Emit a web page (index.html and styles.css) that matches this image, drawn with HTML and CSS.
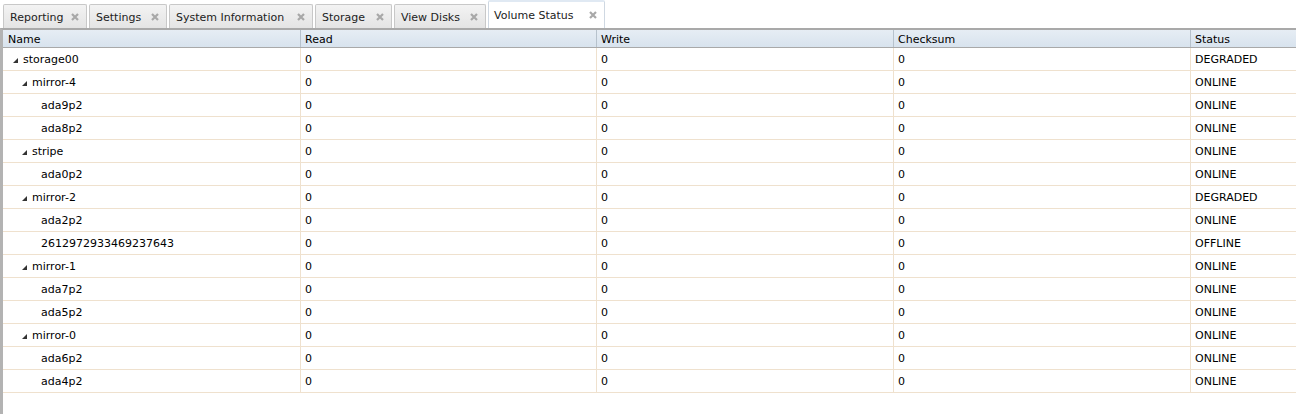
FILE: index.html
```html
<!DOCTYPE html>
<html>
<head>
<meta charset="utf-8">
<link rel="stylesheet" href="styles.css">
</head>
<body>
<div class="tabs">
  <div class="tab"><span>Reporting</span><svg class="x" viewBox="0 0 8 8"><path d="M1 1L7 7M7 1L1 7"/></svg></div>
  <div class="tab"><span>Settings</span><svg class="x" viewBox="0 0 8 8"><path d="M1 1L7 7M7 1L1 7"/></svg></div>
  <div class="tab"><span>System Information</span><svg class="x" viewBox="0 0 8 8"><path d="M1 1L7 7M7 1L1 7"/></svg></div>
  <div class="tab"><span>Storage</span><svg class="x" viewBox="0 0 8 8"><path d="M1 1L7 7M7 1L1 7"/></svg></div>
  <div class="tab"><span>View Disks</span><svg class="x" viewBox="0 0 8 8"><path d="M1 1L7 7M7 1L1 7"/></svg></div>
  <div class="tab active"><span>Volume Status</span><svg class="x" viewBox="0 0 8 8"><path d="M1 1L7 7M7 1L1 7"/></svg></div>
</div>
<div class="panel">
  <div class="row head">
    <div class="c c1">Name</div><div class="c c2">Read</div><div class="c c3">Write</div><div class="c c4">Checksum</div><div class="c c5">Status</div>
  </div>
  <div class="row"><div class="c c1 l0"><i class="tri"></i>storage00</div><div class="c c2">0</div><div class="c c3">0</div><div class="c c4">0</div><div class="c c5">DEGRADED</div></div>
  <div class="row"><div class="c c1 l1"><i class="tri"></i>mirror-4</div><div class="c c2">0</div><div class="c c3">0</div><div class="c c4">0</div><div class="c c5">ONLINE</div></div>
  <div class="row"><div class="c c1 l2">ada9p2</div><div class="c c2">0</div><div class="c c3">0</div><div class="c c4">0</div><div class="c c5">ONLINE</div></div>
  <div class="row"><div class="c c1 l2">ada8p2</div><div class="c c2">0</div><div class="c c3">0</div><div class="c c4">0</div><div class="c c5">ONLINE</div></div>
  <div class="row"><div class="c c1 l1"><i class="tri"></i>stripe</div><div class="c c2">0</div><div class="c c3">0</div><div class="c c4">0</div><div class="c c5">ONLINE</div></div>
  <div class="row"><div class="c c1 l2">ada0p2</div><div class="c c2">0</div><div class="c c3">0</div><div class="c c4">0</div><div class="c c5">ONLINE</div></div>
  <div class="row"><div class="c c1 l1"><i class="tri"></i>mirror-2</div><div class="c c2">0</div><div class="c c3">0</div><div class="c c4">0</div><div class="c c5">DEGRADED</div></div>
  <div class="row"><div class="c c1 l2">ada2p2</div><div class="c c2">0</div><div class="c c3">0</div><div class="c c4">0</div><div class="c c5">ONLINE</div></div>
  <div class="row"><div class="c c1 l2">2612972933469237643</div><div class="c c2">0</div><div class="c c3">0</div><div class="c c4">0</div><div class="c c5">OFFLINE</div></div>
  <div class="row"><div class="c c1 l1"><i class="tri"></i>mirror-1</div><div class="c c2">0</div><div class="c c3">0</div><div class="c c4">0</div><div class="c c5">ONLINE</div></div>
  <div class="row"><div class="c c1 l2">ada7p2</div><div class="c c2">0</div><div class="c c3">0</div><div class="c c4">0</div><div class="c c5">ONLINE</div></div>
  <div class="row"><div class="c c1 l2">ada5p2</div><div class="c c2">0</div><div class="c c3">0</div><div class="c c4">0</div><div class="c c5">ONLINE</div></div>
  <div class="row"><div class="c c1 l1"><i class="tri"></i>mirror-0</div><div class="c c2">0</div><div class="c c3">0</div><div class="c c4">0</div><div class="c c5">ONLINE</div></div>
  <div class="row"><div class="c c1 l2">ada6p2</div><div class="c c2">0</div><div class="c c3">0</div><div class="c c4">0</div><div class="c c5">ONLINE</div></div>
  <div class="row"><div class="c c1 l2">ada4p2</div><div class="c c2">0</div><div class="c c3">0</div><div class="c c4">0</div><div class="c c5">ONLINE</div></div>
</div>
</body>
</html>
```
FILE: styles.css
```css
html, body { margin: 0; padding: 0; background: #fff; }
body {
  width: 1296px; height: 414px; overflow: hidden;
  font-family: "DejaVu Sans", Verdana, sans-serif;
  font-size: 11px; color: #000;
}
.tabs {
  display: flex; align-items: flex-end; gap: 2px;
  height: 28px; padding-left: 3px; box-sizing: border-box;
}
.tab {
  display: flex; align-items: center; justify-content: space-between;
  height: 24px; box-sizing: border-box;
  padding: 0 7px 0 6px;
  border: 1px solid #c8c8c8; border-bottom: none;
  border-radius: 2px 2px 0 0;
  background: linear-gradient(#f3f3f3, #e4e4e4);
  color: #222; gap: 6px; white-space: nowrap;
}
.tab:nth-child(1) { width: 84px; }
.tab:nth-child(2) { width: 78px; }
.tab:nth-child(3) { width: 144px; }
.tab:nth-child(4) { width: 77px; }
.tab:nth-child(5) { width: 92px; }
.tab.active {
  width: 117px; height: 28px;
  background: #fff; border-color: #cfd8e2;
  border-top: 2px solid #e0e9f3;
  padding-left: 5px;
}
.tab span { padding-top: 1px; }
.x { width: 8px; height: 8px; flex: none; }
.x path { stroke: #a8a8a8; stroke-width: 2.2; fill: none; }
.panel {
  border-left: 3px solid #b3b3b3;
  border-top: 2px solid #a9a9a9;
  height: 386px; box-sizing: border-box;
}
.row {
  display: flex; height: 23px; box-sizing: border-box;
  border-bottom: 1px solid #efe1ce;
}
.row.head {
  height: 18px;
  background: linear-gradient(#e6edf4, #d8e3ee);
  border-bottom: 1px solid #a9a9a9;
}
.c {
  box-sizing: border-box; display: flex; align-items: center;
  padding-left: 5px; white-space: nowrap; overflow: hidden;
  border-right: 1px solid #efe1ce;
}
.head .c { border-right: 1px solid #b7c2cc; padding-top: 2px; }
.c1 { width: 298px; }
.c2 { width: 296px; padding-left: 4px; }
.c3 { width: 297px; padding-left: 4px; }
.c4 { width: 297px; padding-left: 4px; }
.c5 { flex: 1; border-right: none; padding-left: 4px; }
.head .c5 { border-right: none; }
.l0 { padding-left: 10px; }
.l1 { padding-left: 19px; }
.l2 { padding-left: 38px; }
.tri {
  width: 0; height: 0; margin-right: 5px; margin-top: 2px;
  border-left: 5px solid transparent;
  border-bottom: 5px solid #333;
}
```
